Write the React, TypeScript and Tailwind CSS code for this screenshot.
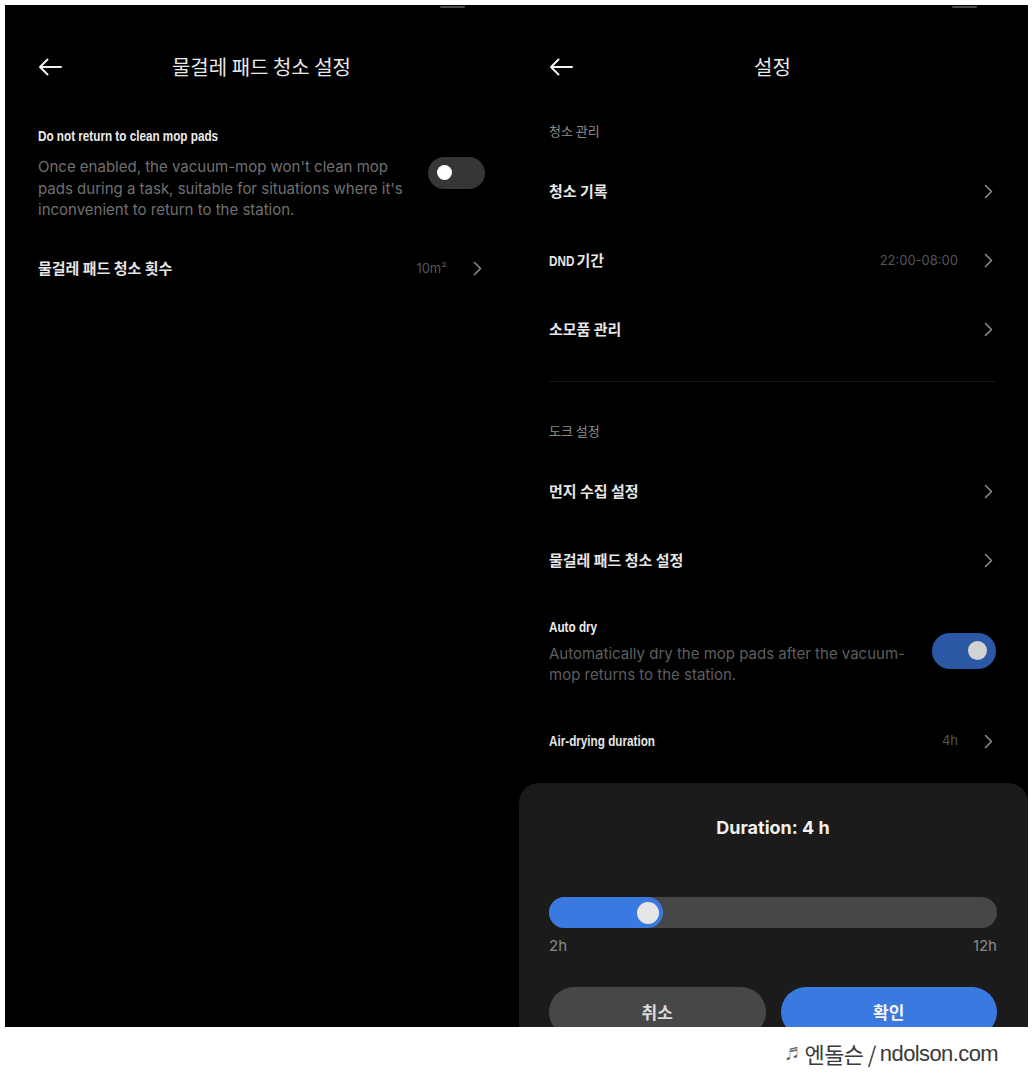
import React from 'react';

const kr = "font-[family-name:'Noto_Sans_CJK_KR',sans-serif]";
const inter = "font-[family-name:Inter,'Noto_Sans_CJK_KR',sans-serif]";
// narrow bold latin, squeezed the way the app's condensed face looks
const narrow =
  "inline-block origin-left scale-x-[0.78] font-[family-name:'Liberation_Sans',sans-serif] font-bold";

const ArrowLeft = () => (
  <svg width="24" height="18" viewBox="0 0 24 18" fill="none">
    <path
      d="M23 9H2M9.5 1.5L2 9l7.5 7.5"
      stroke="#f2f2f2"
      strokeWidth="2"
      strokeLinecap="round"
      strokeLinejoin="round"
    />
  </svg>
);

const Chevron = () => (
  <svg width="9" height="15" viewBox="0 0 9 15" fill="none">
    <path
      d="M1.5 1.5l6 6-6 6"
      stroke="#8a8a8a"
      strokeWidth="1.6"
      strokeLinecap="round"
      strokeLinejoin="round"
    />
  </svg>
);

const Header = ({ title }: { title: string }) => (
  <div className="mt-[39px] flex h-[46px] items-center">
    <div className="flex w-[24px] items-center">
      <ArrowLeft />
    </div>
    <div className={`flex-1 text-center text-[20px] text-[#e8e8e8] ${kr}`}>
      {title}
    </div>
    <div className="w-[24px]" />
  </div>
);

const Row = ({
  label,
  value,
  height = 'h-[69px]',
}: {
  label: React.ReactNode;
  value?: string;
  height?: string;
}) => (
  <div className={`flex items-center justify-between pt-[2px] ${height}`}>
    <span className={`text-[15px] font-bold text-[#e6e6e6] ${kr}`}>
      {label}
    </span>
    <div className="flex items-center gap-[26px] pr-[3px]">
      {value && (
        <span className={`text-[13px] text-[#555555] ${inter}`}>{value}</span>
      )}
      <Chevron />
    </div>
  </div>
);

const Toggle = ({ on }: { on: boolean }) =>
  on ? (
    <div className="flex h-[36px] w-[64px] shrink-0 items-center justify-end rounded-full bg-[#2c59a6] pr-[9px]">
      <div className="h-[19px] w-[19px] rounded-full bg-[#d2d2d2]" />
    </div>
  ) : (
    <div className="flex h-[32px] w-[57px] shrink-0 items-center rounded-full bg-[#363636] pl-[9px]">
      <div className="h-[15px] w-[15px] rounded-full bg-white" />
    </div>
  );

const SectionTitle = ({ text }: { text: string }) => (
  <div className={`h-[18px] text-[13px] leading-[18px] text-[#8c8c8c] ${kr}`}>
    {text}
  </div>
);

const LeftPhone = () => (
  <div className="relative flex w-[512px] shrink-0 flex-col pl-[33px] pr-[32px]">
    <div className="absolute left-[435px] top-[1px] h-[2px] w-[25px] rounded-full bg-[#4a4a4a]" />
    <Header title="물걸레 패드 청소 설정" />
    <div className="mt-[35px] flex items-center gap-[14px]">
      <div className="min-w-0 flex-1">
        <div className="h-[20px] text-[15px] leading-[20px] text-[#ececec]">
          <span className={narrow}>Do not return to clean mop pads</span>
        </div>
        <p
          className={`mt-[11px] text-[15px] leading-[21.5px] text-[#707070] ${inter}`}
        >
          Once enabled, the vacuum-mop won't clean mop pads during a task,
          suitable for situations where it's inconvenient to return to the
          station.
        </p>
      </div>
      <Toggle on={false} />
    </div>
    <div className="mt-[24px]">
      <Row label="물걸레 패드 청소 횟수" value="10m²" height="h-[46px]" />
    </div>
  </div>
);

const BottomSheet = () => (
  <div className="absolute bottom-0 left-[2px] right-0 top-[778px] rounded-t-[20px] bg-[#1b1b1b] pl-[30px] pr-[31px]">
    <div
      className={`mt-[33px] text-center text-[18px] font-bold leading-[24px] text-[#f0f0f0] ${inter}`}
    >
      Duration: 4 h
    </div>
    <div className="mt-[57px] h-[31px] rounded-full bg-[#474747]">
      <div className="flex h-full w-[114px] items-center justify-end rounded-full bg-[#3a7ae0] pr-[4px]">
        <div className="h-[22px] w-[22px] rounded-full bg-[#e6e6e6]" />
      </div>
    </div>
    <div
      className={`mt-[8px] flex justify-between text-[15px] leading-[20px] text-[#8a8a8a] ${inter}`}
    >
      <span>2h</span>
      <span>12h</span>
    </div>
    <div className="mt-[31px] flex gap-[15px]">
      <button
        className={`flex h-[50px] flex-1 items-center justify-center rounded-full bg-[#474747] text-[17px] font-bold text-[#dcdcdc] ${kr}`}
      >
        취소
      </button>
      <button
        className={`flex h-[50px] flex-1 items-center justify-center rounded-full bg-[#3a7ae0] text-[17px] font-bold text-[#f4f4f4] ${kr}`}
      >
        확인
      </button>
    </div>
  </div>
);

const RightPhone = () => (
  <div className="relative flex flex-1 flex-col pl-[32px] pr-[32px]">
    <div className="absolute left-[435px] top-[1px] h-[2px] w-[25px] rounded-full bg-[#4a4a4a]" />
    <Header title="설정" />
    <div className="mt-[32px]">
      <SectionTitle text="청소 관리" />
    </div>
    <div className="mt-[16px]">
      <Row label="청소 기록" />
      <Row
        label={
          <>
            <span className={`${narrow} w-[24px]`}>DND</span> 기간
          </>
        }
        value="22:00-08:00"
      />
      <Row label="소모품 관리" />
    </div>
    <div className="mt-[18px] h-px bg-[#161616]" />
    <div className="mt-[40px]">
      <SectionTitle text="도크 설정" />
    </div>
    <div className="mt-[16px]">
      <Row label="먼지 수집 설정" />
      <Row label="물걸레 패드 청소 설정" />
    </div>
    <div className="mt-[22px] flex items-center gap-[20px]">
      <div className="min-w-0 flex-1">
        <div className="h-[20px] text-[15px] leading-[20px] text-[#ececec]">
          <span className={narrow}>Auto dry</span>
        </div>
        <p
          className={`mt-[7px] text-[15px] leading-[21px] text-[#5e5e5e] ${inter}`}
        >
          Automatically dry the mop pads after the vacuum-mop returns to the
          station.
        </p>
      </div>
      <Toggle on />
    </div>
    <div className="mt-[32px]">
      <Row
        label={<span className={narrow}>Air-drying duration</span>}
        value="4h"
        height="h-[46px]"
      />
    </div>
    <BottomSheet />
  </div>
);

export default function App() {
  return (
    <div className="h-[1079px] w-[1034px] bg-white">
      <div className="pl-[5px] pt-[5px]">
        <div className="flex h-[1022px] w-[1023px] overflow-hidden bg-black">
          <LeftPhone />
          <RightPhone />
        </div>
      </div>
      <div
        className={`flex h-[52px] items-center justify-end pr-[36px] text-[22px] tracking-[-0.6px] text-[#3a3a3a] ${kr}`}
      >
        <span className="mr-[6px] text-[13px] text-[#666]">♬</span>
        <span>엔돌슨 / </span>
        <span className="ml-[4px] font-[family-name:'Liberation_Sans',sans-serif]">
          ndolson.com
        </span>
      </div>
    </div>
  );
}
